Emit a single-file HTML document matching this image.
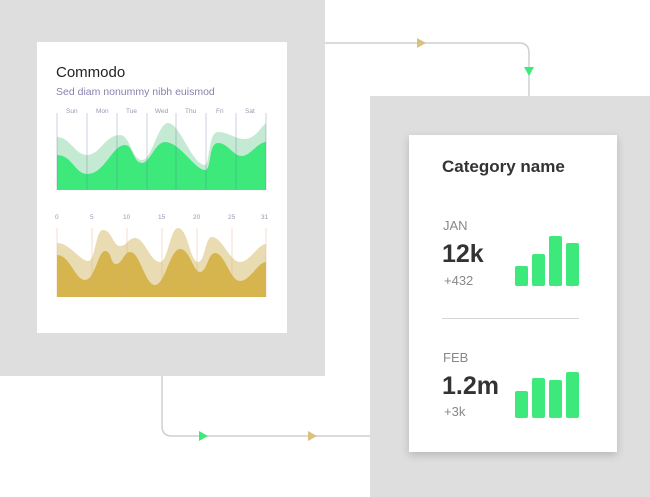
<!DOCTYPE html>
<html><head><style>
html,body{margin:0;padding:0;width:650px;height:497px;overflow:hidden;background:#fff;font-family:"Liberation Sans",sans-serif;position:relative}
.abs{position:absolute}
</style></head><body>
<div class="abs" style="left:0;top:0;width:325px;height:376px;background:#dedede"></div>
<div class="abs" style="left:370px;top:96px;width:280px;height:401px;background:#dedede"></div>
<svg class="abs" style="left:0;top:0" width="650" height="497">
<path d="M325 43 H519 Q529 43 529 53 V96" fill="none" stroke="#cfcfcf" stroke-width="1.5"/>
<path d="M162 376 V426 Q162 436 172 436 H370" fill="none" stroke="#cfcfcf" stroke-width="1.5"/>
<polygon points="417,38 426,43 417,48" fill="#d8c27e"/>
<polygon points="524,67 534,67 529,76" fill="#3de97b"/>
<polygon points="199,431 208,436 199,441" fill="#3de97b"/>
<polygon points="308,431 317,436 308,441" fill="#d8c27e"/>
</svg>
<div class="abs" style="left:37px;top:42px;width:250px;height:291px;background:#fff"></div>
<div class="abs" style="left:56px;top:64px;font-size:15px;color:#222">Commodo</div>
<div class="abs" style="left:56px;top:86px;font-size:10.5px;color:#8a80b0">Sed diam nonummy nibh euismod</div>
<svg class="abs" style="left:0;top:0" width="650" height="497" font-family="Liberation Sans" font-size="6.5" fill="#9a98b0">
<text x="66" y="113">Sun</text><text x="96" y="113">Mon</text><text x="126" y="113">Tue</text><text x="155" y="113">Wed</text><text x="185" y="113">Thu</text><text x="216" y="113">Fri</text><text x="245" y="113">Sat</text>
<path d="M57 137 C70 137 75 155 87 155 C100 155 105 135 120 135 C130 135 132 160 142 160 C152 160 158 123 168 123 C180 123 192 165 205 165 C210 165 208 132 218 132 C228 132 235 139 245 139 C255 139 260 128 266 123 V190 H57Z" fill="#c5ead3"/>
<path d="M57 155 C72 155 75 174 87 174 C105 174 112 145 125 145 C133 145 133 163 142 163 C150 163 155 142 165 142 C180 142 195 170 205 170 C212 170 208 143 218 143 C228 143 233 156 242 156 C250 156 258 142 266 142 V190 H57Z" fill="#3de97b"/>
<g stroke="#5a6a9a" stroke-opacity=".3" stroke-width="1"><path d="M57 113V190M87 113V190M117 113V190M147 113V190M176 113V190M206 113V190M236 113V190M266 113V190"/></g>
<text x="55" y="219">0</text><text x="90" y="219">5</text><text x="123" y="219">10</text><text x="158" y="219">15</text><text x="193" y="219">20</text><text x="228" y="219">25</text><text x="261" y="219">31</text>
<path d="M57 243 C70 243 80 261 88 261 C96 261 95 230 103 230 C112 230 113 246 120 246 C127 246 128 238 135 238 C145 238 150 262 160 262 C168 262 170 228 178 228 C188 228 190 262 198 262 C205 262 205 237 212 237 C222 237 230 262 240 262 C250 262 258 244 266 244 V297 H57Z" fill="#eadcb2"/>
<path d="M57 255 C70 255 75 280 85 280 C95 280 98 251 105 251 C112 251 110 264 116 264 C122 264 124 252 130 252 C140 252 145 285 155 285 C165 285 170 249 180 249 C190 249 193 272 200 272 C207 272 208 253 215 253 C225 253 230 281 240 281 C250 281 258 262 266 262 V297 H57Z" fill="#d6b54e"/>
<g stroke="#e0a080" stroke-opacity=".35" stroke-width="1"><path d="M57 228V297M92 228V297M127 228V297M162 228V297M197 228V297M232 228V297M266 228V297"/></g>
</svg>
<div class="abs" style="left:409px;top:135px;width:208px;height:317px;background:#fff;box-shadow:0 3px 8px rgba(0,0,0,.18)"></div>
<div class="abs" style="left:442px;top:157px;font-size:17px;font-weight:bold;color:#333">Category name</div>
<div class="abs" style="left:443px;top:218px;font-size:13px;color:#888">JAN</div>
<div class="abs" style="left:442px;top:240px;font-size:25px;font-weight:bold;color:#333">12k</div>
<div class="abs" style="left:444px;top:273px;font-size:13px;color:#888">+432</div>
<div class="abs" style="left:442px;top:318px;width:137px;height:1px;background:#d6d6d6"></div>
<div class="abs" style="left:443px;top:350px;font-size:13px;color:#888">FEB</div>
<div class="abs" style="left:442px;top:372px;font-size:25px;font-weight:bold;color:#333">1.2m</div>
<div class="abs" style="left:444px;top:404px;font-size:13px;color:#888">+3k</div>
<svg class="abs" style="left:0;top:0" width="650" height="497" fill="#3de97b">
<rect x="515" y="266" width="13" height="20" rx="2"/><rect x="532" y="254" width="13" height="32" rx="2"/><rect x="549" y="236" width="13" height="50" rx="2"/><rect x="566" y="243" width="13" height="43" rx="2"/>
<rect x="515" y="391" width="13" height="27" rx="2"/><rect x="532" y="378" width="13" height="40" rx="2"/><rect x="549" y="380" width="13" height="38" rx="2"/><rect x="566" y="372" width="13" height="46" rx="2"/>
</svg>
</body></html>
